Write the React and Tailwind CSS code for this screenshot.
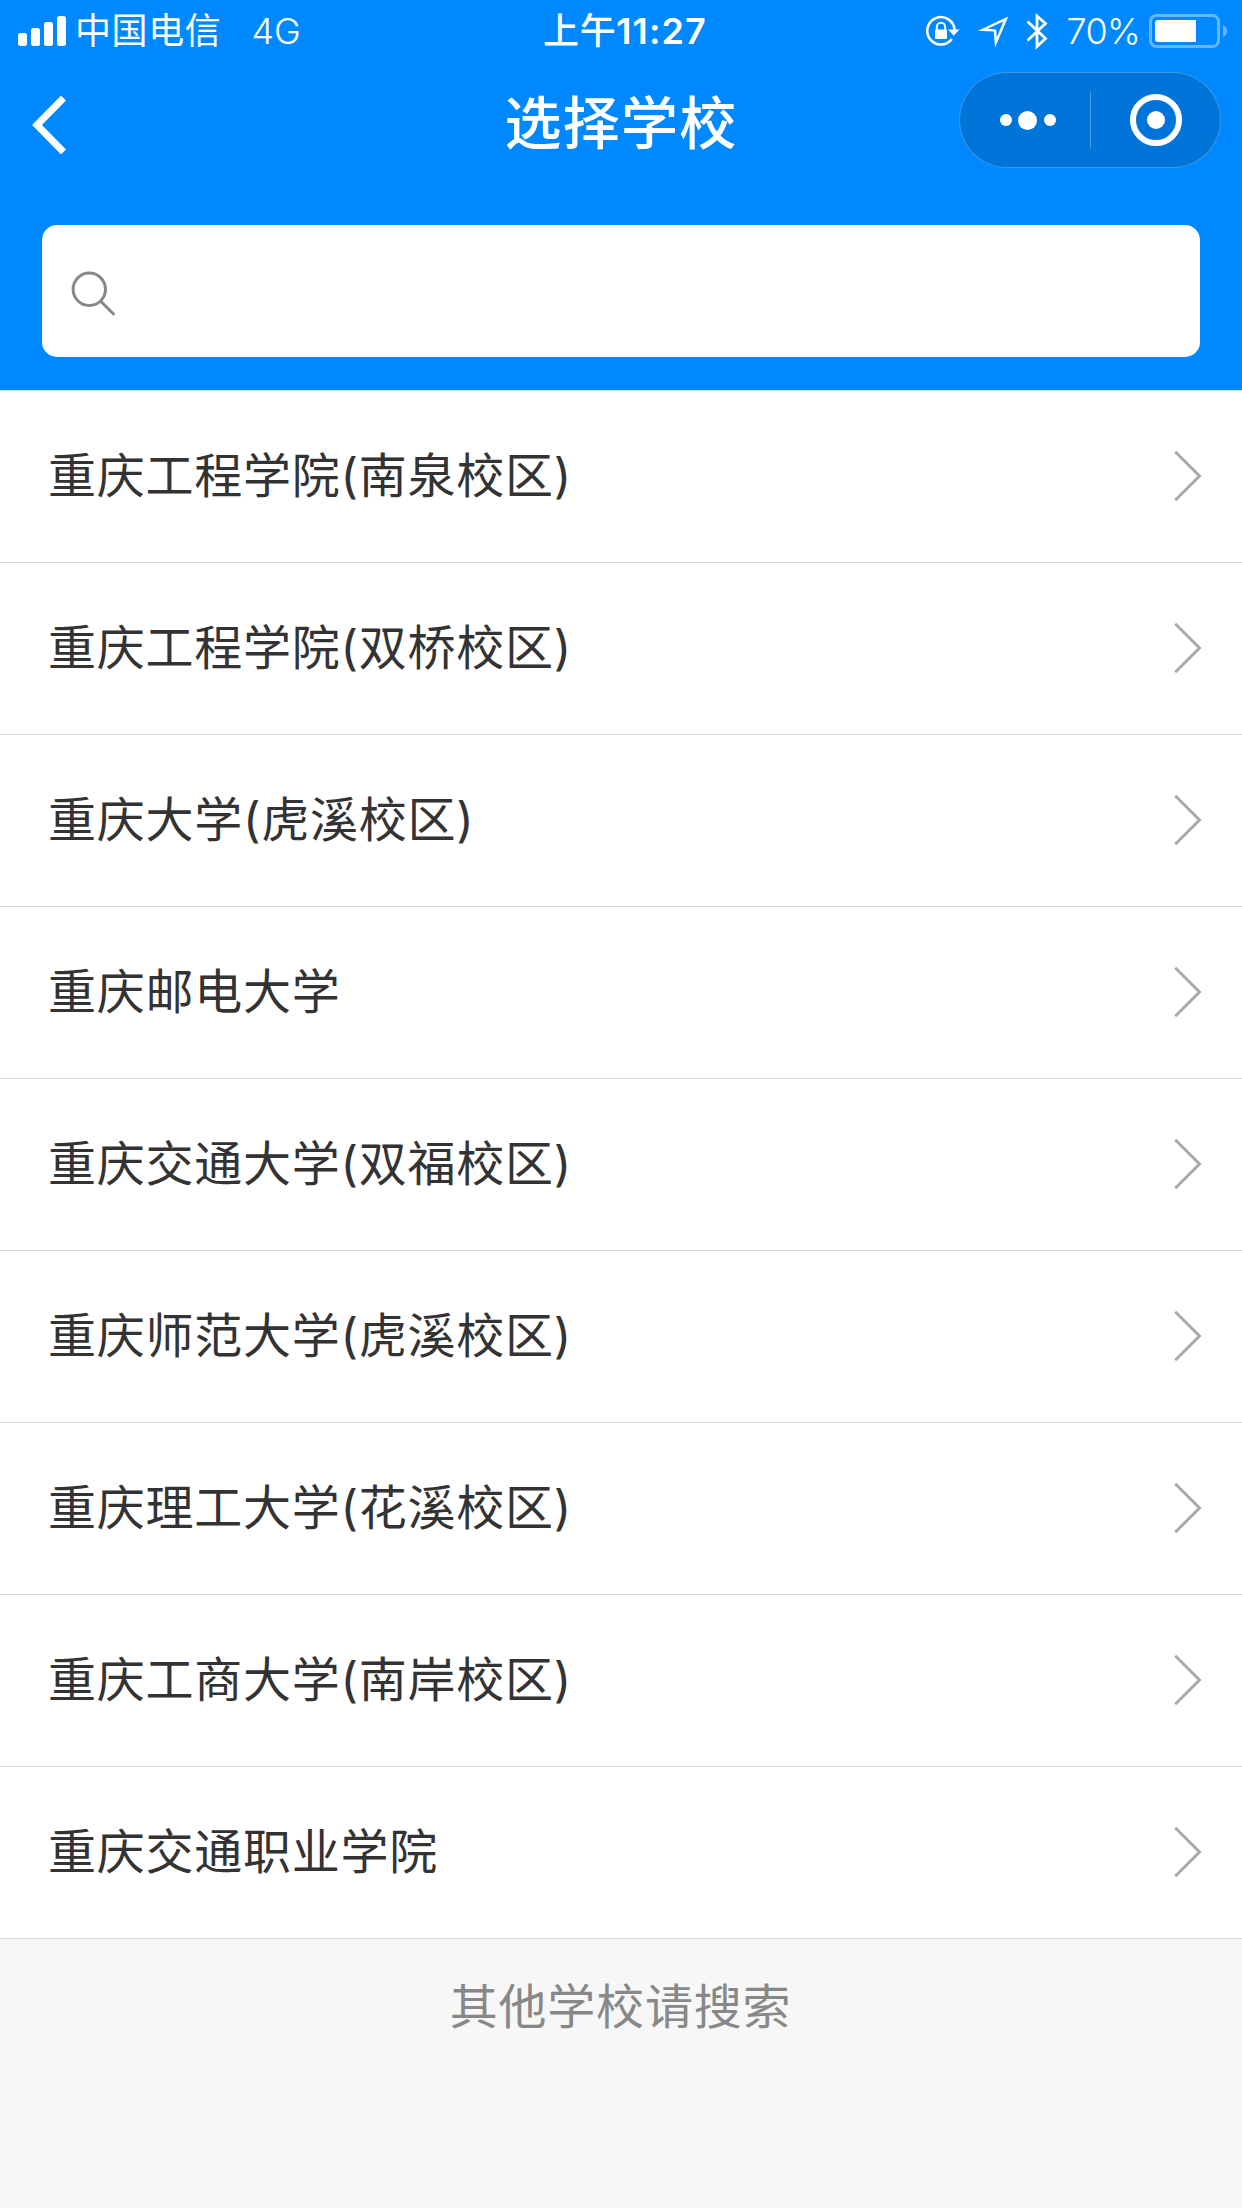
import React, { useState } from 'react';

const SCHOOLS = [
  '重庆工程学院(南泉校区)',
  '重庆工程学院(双桥校区)',
  '重庆大学(虎溪校区)',
  '重庆邮电大学',
  '重庆交通大学(双福校区)',
  '重庆师范大学(虎溪校区)',
  '重庆理工大学(花溪校区)',
  '重庆工商大学(南岸校区)',
  '重庆交通职业学院',
];

const StatusBar = () => (
  <div className="grid h-[60px] grid-cols-3 items-center text-[36px] leading-[60px]">
    <div className="flex items-center pl-[18px]">
      <svg width="48" height="30" viewBox="0 0 48 30" fill="currentColor">
        <rect x="0" y="17" width="9" height="13" rx="2.5" />
        <rect x="13" y="12" width="9" height="18" rx="2.5" />
        <rect x="26" y="6" width="9" height="24" rx="2.5" />
        <rect x="39" y="0" width="9" height="30" rx="2.5" />
      </svg>
      <span className="ml-[9px] pt-px tracking-[0.6px]">中国电信</span>
      <span className="ml-[30px] pt-px font-[350]">4G</span>
    </div>
    <div className="pt-px pl-[8px] text-center font-medium">
      <span className="tracking-[0.6px]">上午</span>
      <span className="font-semibold tracking-[1.1px]">11:27</span>
    </div>
    <div className="flex items-center justify-end pr-[15px]">
      {/* rotation lock */}
      <svg width="36" height="36" viewBox="0 0 36 36" fill="none" stroke="currentColor">
        <path d="M27.9 26 A13.7 13.7 0 1 1 30.6 17" strokeWidth="2.6" />
        <path d="M24 16.5 H35.5 L29.7 22.8 Z" fill="currentColor" stroke="none" />
        <rect x="11" y="16.5" width="12" height="9.5" rx="1" fill="currentColor" stroke="none" />
        <path d="M12.8 17.5 V14 a4.2 4.2 0 0 1 8.4 0 V17.5" strokeWidth="2" />
      </svg>
      <svg className="ml-[17px]" width="32" height="34" viewBox="0 0 32 34" fill="currentColor" fillRule="evenodd">
        <path d="M31.3 2.5 L18 33.5 L16.8 17.5 L1 16.8 Z M26.3 7.6 L10.5 14.8 L19.2 15.4 L19.8 23.5 Z" />
      </svg>
      <svg className="ml-[17px]" width="22" height="38" viewBox="0 0 22 38" fill="none" stroke="currentColor" strokeWidth="2.8">
        <path d="M1.5 9.5 L19.5 26.5 L11 34.5 V4 L19.5 11.5 L1.5 28.5" />
      </svg>
      <span className="ml-[19px] pt-px font-[350] tracking-[-0.7px]">70%</span>
      <svg className="ml-[9px]" width="78" height="34" viewBox="0 0 78 34" fill="currentColor">
        <rect x="1.5" y="1.5" width="68" height="31" rx="6" fill="none" stroke="currentColor" strokeWidth="3" opacity="0.4" />
        <path d="M9 6 H47 V28 H9 a3 3 0 0 1 -3 -3 V9 a3 3 0 0 1 3 -3 Z" />
        <path d="M74 11 Q78 13 78 17 T74 23 Z" opacity="0.4" />
      </svg>
    </div>
  </div>
);

const NavBar = () => (
  <div className="grid h-[120px] grid-cols-3 items-center">
    <button className="w-fit pl-[32px] pt-[10px]">
      <svg width="34" height="58" viewBox="0 0 34 58" fill="none" stroke="currentColor" strokeWidth="7">
        <path d="M31.5 2 L5 29 L31.5 56" />
      </svg>
    </button>
    <h1 className="pt-2 text-center text-[57px] leading-[84px] font-medium tracking-[1.3px]">选择学校</h1>
    <div className="flex h-24 w-[262px] items-center justify-self-end rounded-full border border-white/25 bg-[#0074d9] mr-[21px]">
      <button className="flex w-[130px] items-center justify-center gap-[6.5px] pl-[5px]">
        <span className="size-3 rounded-full bg-white" />
        <span className="size-[19px] rounded-full bg-white" />
        <span className="size-3 rounded-full bg-white" />
      </button>
      <span className="h-14 w-px bg-white/30" />
      <button className="flex flex-1 items-center justify-center">
        <span className="flex size-[52px] items-center justify-center rounded-full border-[6px] border-white">
          <span className="size-[18px] rounded-full bg-white" />
        </span>
      </button>
    </div>
  </div>
);

const SearchBox = ({ value, onChange }) => (
  <label className="mx-[42px] mt-[45px] flex h-[132px] items-center rounded-[15px] bg-white pl-[29px]">
    <svg className="overflow-visible" width="46" height="46" viewBox="0 0 46 46" fill="none" stroke="#888" strokeWidth="3" strokeLinecap="round">
      <circle cx="18.3" cy="21.3" r="16.2" />
      <path d="M30 33.5 L42.5 46" />
    </svg>
    <input
      className="ml-6 flex-1 bg-transparent text-[48px] text-[#333] outline-none"
      value={value}
      onChange={e => onChange(e.target.value)}
    />
  </label>
);

const SchoolRow = ({ name }) => (
  <li className="flex h-[172px] items-center justify-between border-t border-[#d9d9d9] pb-px pl-12 pr-10">
    <span className="text-[48px] leading-[72px] tracking-[0.75px] text-[#333]">{name}</span>
    <svg width="28" height="52" viewBox="0 0 28 52" fill="none" stroke="#aaa" strokeWidth="3">
      <path d="M1.2 1.7 L25.5 26 L1.2 50.3" />
    </svg>
  </li>
);

const App = () => {
  const [keyword, setKeyword] = useState('');
  const schools = SCHOOLS.filter(name => name.includes(keyword.trim()));

  return (
    <div className="min-h-[2208px] w-[1242px] bg-[#f7f7f7] font-[Inter,'Noto_Sans_CJK_SC',sans-serif]">
      <header className="h-[390px] bg-[#0088ff] text-white">
        <StatusBar />
        <NavBar />
        <SearchBox value={keyword} onChange={setKeyword} />
      </header>
      <ul className="border-b border-[#d9d9d9] bg-white">
        {schools.map(name => <SchoolRow key={name} name={name} />)}
      </ul>
      <p className="pt-8 pr-px text-center text-[48px] leading-[72px] tracking-[0.8px] text-[#888]">其他学校请搜索</p>
    </div>
  );
};

export default App;
